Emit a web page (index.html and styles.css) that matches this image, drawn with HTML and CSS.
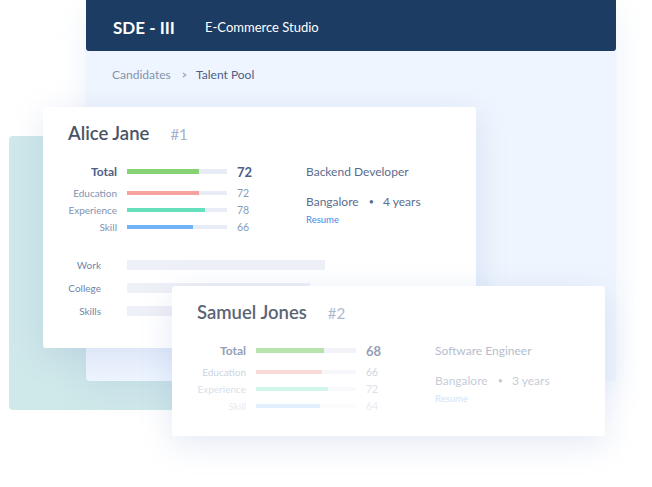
FILE: index.html
```html
<!DOCTYPE html>
<html>
<head>
<meta charset="utf-8">
<link rel="stylesheet" href="styles.css">
</head>
<body>
<div class="stage">
  <div class="teal"></div>
  <div class="panel">
    <div class="panel-header">
      <span class="role">SDE - III</span>
      <span class="studio">E-Commerce Studio</span>
    </div>
    <div class="crumbs">
      <span class="crumb">Candidates</span>
      <span class="sep">&gt;</span>
      <span class="crumb current">Talent Pool</span>
    </div>
  </div>

  <div class="card card-1">
    <div class="card-title"><span class="name">Alice Jane</span><span class="rank">#1</span></div>
    <div class="card-body">
      <div class="scores">
        <div class="row total"><span class="label">Total</span><span class="track"><span class="fill green" style="width:72%"></span></span><span class="value">72</span></div>
        <div class="row"><span class="label">Education</span><span class="track"><span class="fill red" style="width:72%"></span></span><span class="value">72</span></div>
        <div class="row"><span class="label">Experience</span><span class="track"><span class="fill teal-c" style="width:78%"></span></span><span class="value">78</span></div>
        <div class="row"><span class="label">Skill</span><span class="track"><span class="fill blue" style="width:66%"></span></span><span class="value">66</span></div>
      </div>
      <div class="info">
        <div class="job">Backend Developer</div>
        <div class="loc">Bangalore <span class="dot">•</span> 4 years</div>
        <div class="resume">Resume</div>
      </div>
    </div>
    <div class="history">
      <div class="hrow"><span class="hlabel">Work</span><span class="hbar" style="width:198px"></span></div>
      <div class="hrow"><span class="hlabel">College</span><span class="hbar" style="width:183px"></span></div>
      <div class="hrow"><span class="hlabel">Skills</span><span class="hbar" style="width:190px"></span></div>
    </div>
  </div>

  <div class="card card-2">
    <div class="card-title f1"><span class="name">Samuel Jones</span><span class="rank">#2</span></div>
    <div class="card-body">
      <div class="scores">
        <div class="row total f2"><span class="label">Total</span><span class="track"><span class="fill green" style="width:68%"></span></span><span class="value">68</span></div>
        <div class="row f3"><span class="label">Education</span><span class="track"><span class="fill red" style="width:66%"></span></span><span class="value">66</span></div>
        <div class="row f4"><span class="label">Experience</span><span class="track"><span class="fill teal-c" style="width:72%"></span></span><span class="value">72</span></div>
        <div class="row f5"><span class="label">Skill</span><span class="track"><span class="fill blue" style="width:64%"></span></span><span class="value">64</span></div>
      </div>
      <div class="info">
        <div class="job">Software Engineer</div>
        <div class="loc">Bangalore <span class="dot">•</span> 3 years</div>
        <div class="resume">Resume</div>
      </div>
    </div>
  </div>
</div>
</body>
</html>
```

FILE: styles.css
```css
* { box-sizing: border-box; }
html, body { margin: 0; padding: 0; background: #ffffff; }
body {
  font-family: "Lato", "Open Sans", sans-serif;
  width: 652px;
  height: 487px;
  overflow: hidden;
}
.stage {
  position: relative;
  width: 652px;
  height: 487px;
}
.teal {
  position: absolute;
  left: 9px;
  top: 136px;
  width: 220px;
  height: 274px;
  background: #cfe8e9;
  border-radius: 4px;
}
.panel {
  position: absolute;
  left: 86px;
  top: 0;
  width: 530px;
  height: 381px;
  background: #eef5fe;
  border-radius: 0 0 4px 4px;
  box-shadow: 0 10px 30px rgba(150, 175, 220, 0.18);
}
.panel-header {
  height: 51px;
  background: #1c3c64;
  border-radius: 0 0 3px 3px;
  display: flex;
  align-items: center;
  padding-left: 27px;
  padding-top: 3px;
}
.role {
  color: #ffffff;
  font-size: 17px;
  font-weight: 700;
  width: 92px;
}
.studio {
  color: #ffffff;
  font-size: 13px;
}
.crumbs {
  display: flex;
  align-items: center;
  padding: 16px 0 0 26px;
  font-size: 12px;
  color: #8393ad;
}
.sep {
  margin: 0 9px 0 10px;
  font-size: 11px;
  transform: scaleX(0.8);
}
.crumb.current { color: #4b6085; }

.card {
  position: absolute;
  background: #ffffff;
  border-radius: 3px;
  box-shadow: 0 8px 32px rgba(120, 145, 205, 0.20);
  overflow: hidden;
}
.card-1 { left: 43px; top: 107px; width: 433px; height: 241px; }
.card-2 { left: 172px; top: 286px; width: 433px; height: 150px; }

.card-title {
  display: flex;
  align-items: baseline;
  padding: 15px 0 0 25px;
  height: 37px;
  white-space: nowrap;
}
.name {
  font-size: 18.5px;
  font-weight: 600;
  color: #4a5466;
  margin-right: 21px;
  line-height: 22px;
}
.rank {
  font-size: 15px;
  color: #a3b2ca;
}
.card-body {
  display: flex;
  margin-top: 19px;
}
.scores {
  width: 263px;
  padding-left: 25px;
}
.row {
  display: flex;
  align-items: center;
  height: 17px;
  font-size: 10px;
  color: #8093b3;
}
.row.total {
  margin-bottom: 4px;
  font-size: 12px;
  font-weight: 700;
  color: #4c6088;
}
.label {
  width: 49px;
  text-align: right;
  margin-right: 10px;
  white-space: nowrap;
}
.track {
  width: 100px;
  height: 4px;
  background: #e8ecf6;
  margin-right: 10px;
  display: flex;
}
.row.total .track { height: 5px; }
.fill { height: 100%; }
.green { background: #86d373; }
.red { background: #f5a2a1; }
.teal-c { background: #66dfbd; }
.blue { background: #71b4f6; }
.value { font-size: 10.5px; color: #8a9bb8; }
.row.total .value { font-size: 13px; color: #4c6088; }

.info {
  font-size: 12px;
  color: #5b6d8e;
  white-space: nowrap;
}
.job { line-height: 17px; }
.loc { margin-top: 13px; line-height: 17px; }
.dot { margin: 0 6px 0 7px; font-size: 9px; vertical-align: 1px; }
.resume {
  margin-top: 4px;
  font-size: 9.5px;
  color: #3b8de6;
}

.history {
  margin-top: 18px;
  padding-left: 25px;
}
.hrow {
  display: flex;
  align-items: center;
  height: 23px;
}
.hlabel {
  width: 33px;
  text-align: right;
  margin-right: 26px;
  font-size: 10px;
  color: #7186a8;
}
.hbar {
  height: 10px;
  background: #eef0f7;
}

.f1 { opacity: 0.9; }
.f2 { opacity: 0.6; }
.f3 { opacity: 0.4; }
.f4 { opacity: 0.3; }
.f5 { opacity: 0.2; }
.card-2 .job { opacity: 0.45; }
.card-2 .loc { opacity: 0.35; }
.card-2 .resume { opacity: 0.25; }
```
